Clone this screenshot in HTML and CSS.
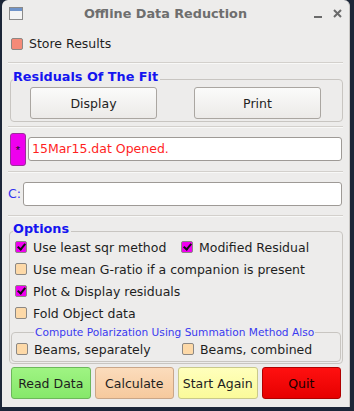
FILE: index.html
```html
<!DOCTYPE html>
<html lang="en">
<head>
    <meta charset="UTF-8">
    <title>Offline Data Reduction</title>
    <link rel="stylesheet" href="styles.css">
</head>
<body>

<div class="window">
    <div class="titlebar">
        <svg class="app-icon" width="14" height="13" viewBox="0 0 14 13">
            <rect x="0.5" y="0.5" width="13" height="12" fill="#f4f4f4" stroke="#8a8a8a"/>
            <rect x="1" y="1" width="12" height="3" fill="#6f93c9"/>
        </svg>
        <div class="title">Offline Data Reduction</div>
        <div class="win-btns">
            <span class="win-min"></span>
            <svg width="9" height="9" viewBox="0 0 9 9">
                <path d="M1 1 L8 8 M8 1 L1 8" stroke="#6a6a6a" stroke-width="2"/>
            </svg>
        </div>
    </div>

    <div class="content">
        <div class="store">
            <span class="box salmon"></span>Store Results
        </div>
        <div class="sep"></div>

        <fieldset class="group residuals">
            <legend>Residuals Of The Fit</legend>
            <div class="btn-row">
                <button class="btn">Display</button>
                <button class="btn">Print</button>
            </div>
        </fieldset>
        <div class="sep"></div>

        <div class="entry-row">
            <button class="star-btn">*</button>
            <div class="entry red">15Mar15.dat Opened.</div>
        </div>
        <div class="sep"></div>

        <div class="entry-row c-row">
            <span class="c-label">C:</span>
            <div class="entry"></div>
        </div>
        <div class="sep"></div>

        <fieldset class="group options">
            <legend>Options</legend>
            <div class="opt-rows">
                <div class="opt-row">
                    <span class="check col"><span class="box on"></span>Use least sqr method</span>
                    <span class="check"><span class="box on"></span>Modified Residual</span>
                </div>
                <div class="opt-row">
                    <span class="check"><span class="box"></span>Use mean G-ratio if a companion is present</span>
                </div>
                <div class="opt-row">
                    <span class="check"><span class="box on"></span>Plot &amp; Display residuals</span>
                </div>
                <div class="opt-row">
                    <span class="check"><span class="box"></span>Fold Object data</span>
                </div>
            </div>
            <fieldset class="group polar">
                <legend>Compute Polarization Using Summation Method Also</legend>
                <div class="opt-row">
                    <span class="check col"><span class="box"></span>Beams, separately</span>
                    <span class="check"><span class="box"></span>Beams, combined</span>
                </div>
            </fieldset>
        </fieldset>

        <div class="actions">
            <button class="act green">Read Data</button>
            <button class="act peach">Calculate</button>
            <button class="act yellow">Start Again</button>
            <button class="act red-btn">Quit</button>
        </div>
    </div>
</div>

</body>
</html>
```

FILE: styles.css
```css
html, body {
    margin: 0;
    padding: 0;
    height: 100%;
}

body {
    background-color: #1c2638;
    font-family: "DejaVu Sans", sans-serif;
    font-size: 12.5px;
    color: #1e1e1e;
}

.window {
    margin: 0 4px 0 2px;
    height: 407px;
    background-color: #edeceb;
    border-radius: 6px 6px 0 0;
    border-right: 1px solid #c9c7c4;
    overflow: hidden;
}

/* title bar */
.titlebar {
    height: 27px;
    display: flex;
    align-items: center;
    position: relative;
}

.app-icon {
    margin-left: 7px;
}

.title {
    position: absolute;
    left: 0;
    right: 0;
    text-align: center;
    font-weight: bold;
    font-size: 12.8px;
    color: #6e6e6e;
    padding-right: 20px;
    pointer-events: none;
}

.win-btns {
    margin-left: auto;
    margin-right: 7px;
    display: flex;
    align-items: center;
    gap: 11px;
}

.win-min {
    display: inline-block;
    width: 8px;
    height: 2px;
    background: #6a6a6a;
    margin-top: 7px;
}

.content {
    padding: 0 6px 0 6px;
}

/* checkboxes */
.box {
    display: inline-block;
    box-sizing: border-box;
    width: 12px;
    height: 12px;
    border: 1px solid #8c8884;
    border-radius: 2px;
    background-color: #fdd9a8;
    margin-right: 6px;
    position: relative;
    flex: none;
}

.box.salmon {
    background-color: #f58a78;
}

.box.on {
    background-color: #f000f0;
}

.box.on::after {
    content: "";
    position: absolute;
    left: 3px;
    top: 0px;
    width: 3px;
    height: 6px;
    border: solid #111;
    border-width: 0 2px 2px 0;
    transform: rotate(40deg);
}

.check {
    display: flex;
    align-items: center;
    white-space: nowrap;
}

.check.col {
    width: 166px;
}

.store {
    height: 33px;
    padding: 0 0 2px 3px;
    display: flex;
    align-items: center;
}

.sep {
    height: 1px;
    background-color: #d3d0cc;
    border-bottom: 1px solid #f8f8f7;
}

/* group boxes */
.group {
    border: 1px solid #c8c5c1;
    border-radius: 4px;
    margin: 0;
    padding: 0;
    min-width: 0;
}

.group legend {
    color: #1414f0;
    font-weight: bold;
    font-size: 12.8px;
    line-height: 14px;
    padding: 0 2px 4px 0;
}

.residuals {
    margin: 6px 0 4px 2px;
}

.residuals legend {
    margin-left: 2px;
}

.btn-row {
    display: flex;
    justify-content: space-between;
    padding: 0 21px 2px 19px;
    margin-top: -1px;
}

.btn {
    font-family: "DejaVu Sans", sans-serif;
    font-size: 12.5px;
    color: #222;
    width: 127px;
    height: 32px;
    background: linear-gradient(#fbfbfa, #eceae8);
    border: 1px solid #aaa6a1;
    border-radius: 3px;
}

/* entries */
.entry-row {
    display: flex;
    align-items: flex-start;
    height: 43px;
}

.star-btn {
    width: 16px;
    height: 33px;
    margin: 5px 2px 0 2px;
    background-color: #ee00ee;
    border: 1px solid #9a2e9a;
    border-radius: 3px;
    padding: 0;
    font-size: 11px;
    color: #111;
}

.entry {
    flex: 1;
    box-sizing: border-box;
    height: 24px;
    margin-top: 9px;
    background: #fff;
    border: 1px solid #9e9a96;
    border-radius: 3px;
    margin-right: 1px;
    padding-left: 3px;
    line-height: 22px;
}

.entry.red {
    color: #ff1f1f;
}

.c-row {
    height: 42px;
}

.c-label {
    color: #3232f0;
    margin: 13px 2px 0 0;
}

/* options */
.options {
    margin: 5px 0 0 1px;
}

.options > legend {
    margin-left: 3px;
}

.opt-rows {
    margin-top: -4px;
}

.opt-row {
    height: 22px;
    display: flex;
    align-items: center;
    padding-left: 5px;
}

.polar {
    margin: 2px 1px 1px 1px;
}

.polar legend {
    font-weight: normal;
    font-size: 10.6px;
    line-height: 12px;
    padding: 0 1px;
    color: #3a3af0;
    margin-left: 22px;
}

.polar .opt-row {
    padding: 0 0 1px 4px;
}

/* action buttons */
.actions {
    display: flex;
    gap: 4px;
    margin: 3px 2px 0 3px;
}

.act {
    flex: 1;
    height: 32px;
    font-family: "DejaVu Sans", sans-serif;
    font-size: 12.5px;
    color: #1e1e1e;
    border-radius: 3px;
    padding: 0;
}

.green {
    background: linear-gradient(#9ff483, #86e86a);
    border: 1px solid #6cb85a;
}

.peach {
    background: linear-gradient(#fbdcbc, #f6c99d);
    border: 1px solid #c9a688;
}

.yellow {
    background: linear-gradient(#ffffbc, #fafa9a);
    border: 1px solid #c9c98a;
}

.red-btn {
    background: linear-gradient(#ff1010, #e60000);
    border: 1px solid #b00000;
    color: #1a0000;
}
```
